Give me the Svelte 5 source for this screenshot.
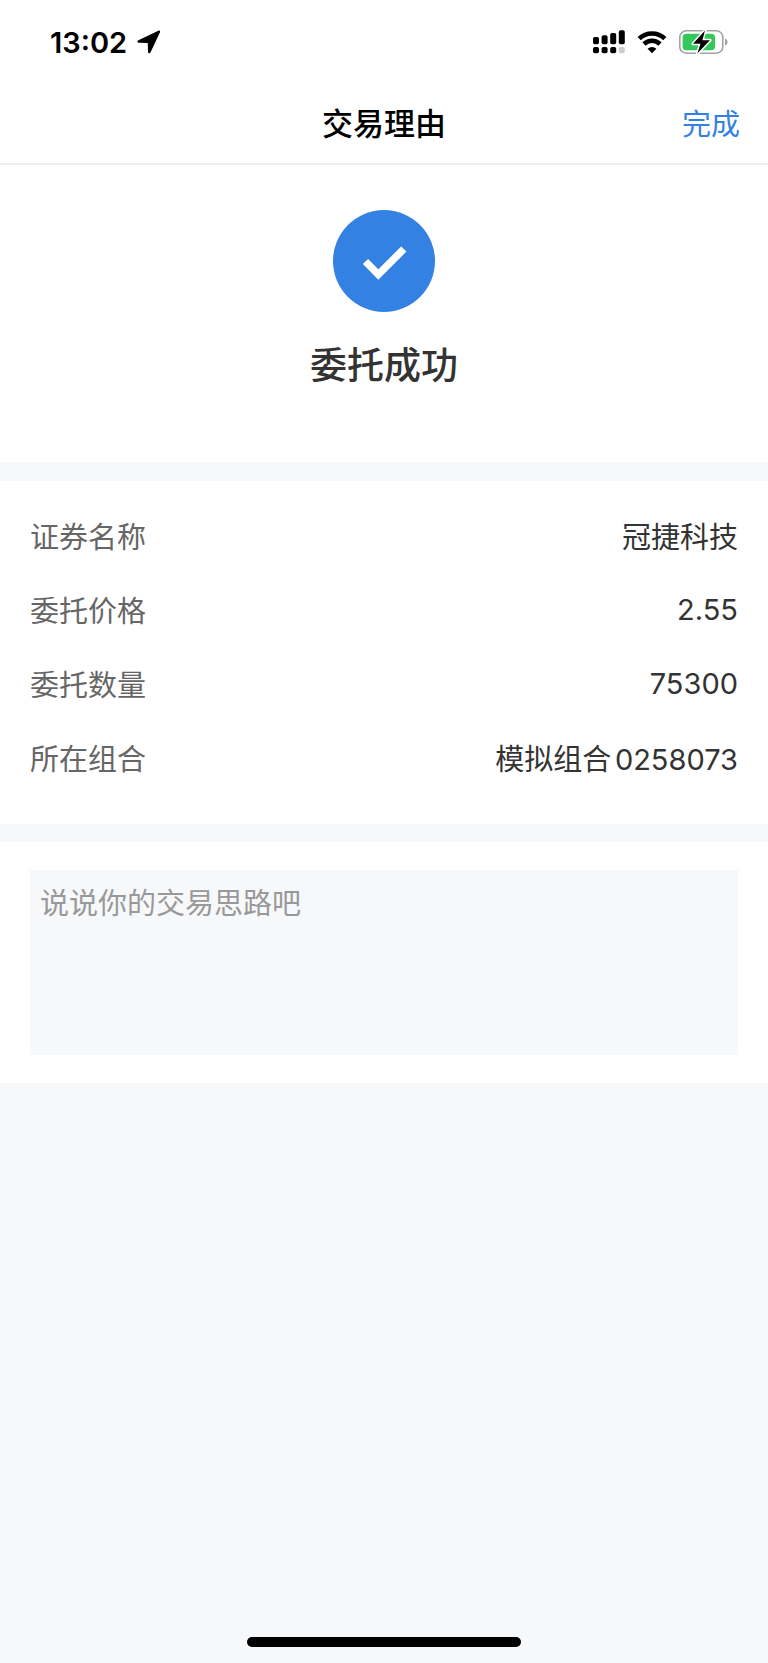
<script lang="ts">
  interface Row {
    label: string;
    value: string;
  }

  const rows: Row[] = [
    { label: '证券名称', value: '冠捷科技' },
    { label: '委托价格', value: '2.55' },
    { label: '委托数量', value: '75300' },
    { label: '所在组合', value: '模拟组合0258073' },
  ];

  let reason = $state('');
</script>

<div class="page">
  <div class="status-bar">
    <div class="status-left">
      <span class="time">13:02</span>
      <svg width="24" height="24" viewBox="0 0 24 24" aria-hidden="true">
        <path d="M21.3 .8 1.4 10.2C-.2 11 .1 12.7 1.8 12.8L10.3 13Q10.8 13 10.8 13.5L11 21.8C11.1 23.6 12.8 23.9 13.6 22.3L22.9 2.6C23.5 1.2 22.6 .2 21.3 .8Z" />
      </svg>
    </div>
    <div class="status-right">
      <svg width="32" height="24" viewBox="0 0 32 24" aria-hidden="true">
        <rect x="0" y="7" width="6" height="7.3" rx="1.8" />
        <rect x="8.6" y="5.2" width="6" height="9.1" rx="1.8" />
        <rect x="17.2" y="3" width="6" height="11.3" rx="1.8" />
        <rect x="25.8" y="0.3" width="6" height="14" rx="1.8" />
        <rect x="0" y="17" width="6" height="6.2" rx="1.8" />
        <rect x="8.6" y="17" width="6" height="6.2" rx="1.8" />
        <rect x="17.2" y="17" width="6" height="6.2" rx="1.8" />
        <rect x="25.8" y="17" width="6" height="6.2" rx="1.8" fill="#ccc" />
      </svg>
      <svg class="wifi" width="30" height="24" viewBox="0 0 30 24" aria-hidden="true">
        <path d="M2.2 8.7a18.2 18.2 0 0 1 25.6 0" />
        <path d="M7 14a11.4 11.4 0 0 1 16 0" />
        <path class="dot" d="M15 23.2 10.6 18.8a6.3 6.3 0 0 1 8.8 0Z" />
      </svg>
      <svg width="49" height="26" viewBox="0 0 49 26" aria-hidden="true">
        <rect x="0.8" y="1.8" width="43" height="22.4" rx="6.5" fill="none" stroke="#a2a2a2" stroke-width="1.6" />
        <path d="M46 9.4c3.4 1.2 3.4 6 0 7.2Z" fill="#a2a2a2" />
        <rect x="3.6" y="4.8" width="32.4" height="16.4" rx="3.8" fill="#34c759" />
        <path d="M26 1.4 14 14.8h7.5L18.3 24.6 31 11.2h-7.6Z" fill="#000" stroke="#fff" stroke-width="3" stroke-linejoin="round" paint-order="stroke" />
      </svg>
    </div>
  </div>

  <header class="nav">
    <h1>交易理由</h1>
    <button type="button" class="done">完成</button>
  </header>

  <section class="result">
    <svg width="102" height="102" viewBox="0 0 102 102" aria-hidden="true">
      <circle cx="51" cy="51" r="51" fill="#3381e3" />
      <path d="M32.5 51.5 45.3 64.5 70.8 39" fill="none" stroke="#fff" stroke-width="7.4" />
    </svg>
    <h2>委托成功</h2>
  </section>

  <dl class="details">
    {#each rows as row}
      <div class="row">
        <dt>{row.label}</dt>
        <dd>{row.value}</dd>
      </div>
    {/each}
  </dl>

  <section class="reason">
    <textarea bind:value={reason} placeholder="说说你的交易思路吧" aria-label="交易理由"></textarea>
  </section>

  <div class="home-indicator"></div>
</div>

<style>
  :global(body) {
    margin: 0;
    background: #f7f8fa;
  }

  .page {
    display: flex;
    flex-direction: column;
    min-height: 100vh;
    background: #f7f8fa;
    color: #333;
    font-family: Inter, 'Noto Sans CJK SC', sans-serif;
    font-size: 29px;
  }

  .status-bar {
    display: flex;
    align-items: center;
    justify-content: space-between;
    height: 84px;
    padding: 0 40px 0 50px;
    background: #fff;
    color: #000;
  }

  .status-left {
    display: flex;
    align-items: center;
    gap: 10px;
  }

  .time {
    font-weight: 600;
  }

  .status-right {
    display: flex;
    align-items: center;
    gap: 12px;
  }

  .wifi path {
    fill: none;
    stroke: #000;
    stroke-width: 4.6;
  }

  .wifi .dot {
    fill: #000;
    stroke: none;
  }

  .nav {
    display: grid;
    grid-template-columns: 1fr auto 1fr;
    align-items: center;
    height: 75px;
    padding: 0 28px 4px;
    background: #fff;
    border-bottom: 2px solid #eee;
  }

  h1 {
    grid-column: 2;
    margin: 0;
    color: #000;
    font-size: 31px;
    font-weight: 500;
  }

  .done {
    justify-self: end;
    padding: 0;
    border: none;
    background: none;
    color: #3381e3;
    font: inherit;
    cursor: pointer;
  }

  .result {
    display: flex;
    flex-direction: column;
    align-items: center;
    gap: 26px;
    padding: 45px 30px 68px;
    background: #fff;
  }

  .result svg {
    display: block;
  }

  h2 {
    margin: 0;
    font-size: 37px;
    font-weight: 500;
    line-height: 56px;
  }

  .details {
    margin: 19px 0 18px;
    padding: 17px 30px 30px;
    background: #fff;
  }

  .row {
    display: flex;
    align-items: center;
    justify-content: space-between;
    height: 74px;
  }

  dt {
    color: #666;
  }

  dd {
    margin: 0;
    text-autospace: normal;
  }

  .reason {
    padding: 28px 30px;
    background: #fff;
  }

  textarea {
    display: block;
    box-sizing: border-box;
    width: 100%;
    height: 185px;
    padding: 13px 10px;
    border: none;
    border-radius: 0;
    outline: none;
    resize: none;
    background: #f7f8fa;
    color: #333;
    font: inherit;
    line-height: 42px;
  }

  textarea::placeholder {
    color: #999;
    opacity: 1;
  }

  .home-indicator {
    width: 274px;
    height: 10px;
    margin: auto auto 16px;
    border-radius: 5px;
    background: #000;
  }
</style>
